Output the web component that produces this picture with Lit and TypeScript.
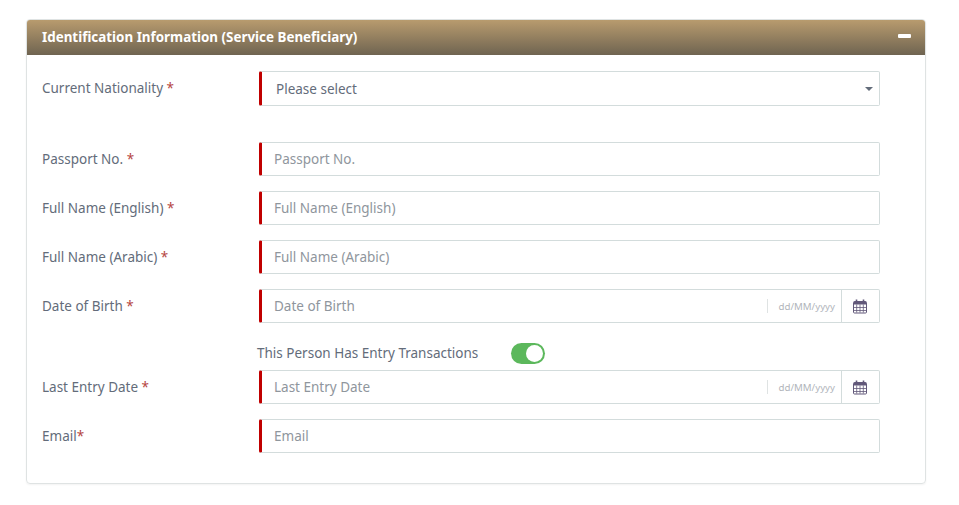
import { LitElement, css, html } from "lit";
import { customElement } from "lit/decorators.js";

const calendar = html`<svg width="14" height="15" viewBox="0 0 14 15">
  <path
    d="M1.5 2.5h11a1 1 0 0 1 1 1v9.500a1 1 0 0 1-1 1h-11a1 1 0 0 1-1-1v-9.500a1 1 0 0 1 1-1z"
    fill="none"
    stroke="#62597a"
  />
  <path d="M1 2.500h12V5.500H1z" fill="#62597a" />
  <path
    d="M1 8.500h12M1 11.500h12M3.700 5.500v8M7 5.500v8M10.300 5.500v8"
    fill="none"
    stroke="#62597a"
    stroke-width="0.8"
  />
  <path d="M3.500 .5v3M10.500 .5v3" stroke="#62597a" stroke-width="1.6" />
</svg>`;

@customElement("app-root")
export class AppRoot extends LitElement {
  renderInput(label: string, star = " *") {
    return html`
      <div class="row">
        <label>${label}<span class="req">${star}</span></label>
        <div class="field">
          <input type="text" placeholder=${label} />
        </div>
      </div>
    `;
  }

  renderDate(label: string) {
    return html`
      <div class="row">
        <label>${label}<span class="req"> *</span></label>
        <div class="field">
          <input type="text" placeholder=${label} />
          <span class="format">dd/MM/yyyy</span>
          <span class="addon">${calendar}</span>
        </div>
      </div>
    `;
  }

  render() {
    return html`
      <div class="card">
        <div class="card-header">
          <span>Identification Information (Service Beneficiary)</span>
          <span class="collapse"></span>
        </div>
        <div class="card-body">
          <div class="row select-row">
            <label>Current Nationality<span class="req"> *</span></label>
            <div class="field select">
              <span>Please select</span>
              <span class="caret"></span>
            </div>
          </div>
          ${this.renderInput("Passport No.")}
          ${this.renderInput("Full Name (English)")}
          ${this.renderInput("Full Name (Arabic)")}
          ${this.renderDate("Date of Birth")}
          <div class="toggle-row">
            <span class="toggle-label">This Person Has Entry Transactions</span>
            <span class="switch"><span class="knob"></span></span>
          </div>
          ${this.renderDate("Last Entry Date")}
          ${this.renderInput("Email", "*")}
        </div>
      </div>
    `;
  }

  static styles = css`
    :host {
      display: block;
      height: 505px;
      padding: 19px 33px 0 26px;
      box-sizing: border-box;
      background: #fff;
      font-family: "Noto Sans", "Open Sans", sans-serif;
      font-size: 13.5px;
      color: #636c7a;
    }

    .card {
      height: 465px;
      box-sizing: border-box;
      border: 1px solid #dfe3e3;
      border-radius: 4px;
      box-shadow: 0 1px 2px rgba(0, 0, 0, 0.05);
    }

    .card-header {
      height: 35px;
      padding: 0 14px 1px 15px;
      box-sizing: border-box;
      display: flex;
      align-items: center;
      justify-content: space-between;
      border-radius: 3px 3px 0 0;
      background: linear-gradient(#b89b6e, #6f6451);
      color: #fff;
      font-size: 13.4px;
      font-weight: 700;
    }

    .collapse {
      width: 13px;
      height: 4px;
      margin-bottom: 2px;
      border-radius: 1px;
      background: #fff;
    }

    .card-body {
      padding: 16px 45px 0 15px;
    }

    .row {
      display: flex;
      height: 34px;
      margin-bottom: 15px;
    }

    .select-row {
      height: 35px;
      margin-bottom: 36px;
    }

    label {
      width: 217px;
      flex: none;
      line-height: 35px;
    }

    .select-row label {
      line-height: 34px;
    }

    .req {
      color: #b5453f;
    }

    .field {
      flex: 1;
      display: flex;
      align-items: center;
      box-sizing: border-box;
      border: 1px solid #d3dcdc;
      border-left: 3px solid #c00000;
      border-radius: 2px;
    }

    .select {
      padding: 0 6px 0 14px;
      justify-content: space-between;
    }

    .caret {
      border: 4px solid transparent;
      border-top-color: #636c7a;
      border-bottom: none;
    }

    input {
      flex: 1;
      min-width: 0;
      height: 100%;
      box-sizing: border-box;
      padding: 0 12px;
      border: none;
      outline: none;
      background: transparent;
      font: inherit;
    }

    input::placeholder {
      color: #8f969d;
      opacity: 1;
    }

    .format {
      height: 14px;
      padding: 0 6px 0 11px;
      border-left: 1px solid #dfe3e3;
      color: #b1b5bb;
      font-size: 9.7px;
      line-height: 15px;
    }

    .addon {
      width: 38px;
      height: 100%;
      flex: none;
      box-sizing: border-box;
      padding-right: 1px;
      display: flex;
      align-items: center;
      justify-content: center;
      border-left: 1px solid #d3dcdc;
    }

    .toggle-row {
      display: flex;
      align-items: center;
      height: 21px;
      margin: 20px 0 6px 215px;
    }

    .toggle-label {
      width: 254px;
      margin-bottom: 2px;
    }

    .switch {
      display: flex;
      justify-content: flex-end;
      align-items: center;
      width: 34px;
      height: 21px;
      padding: 0 2px;
      box-sizing: border-box;
      border-radius: 11px;
      background: #5cb85c;
    }

    .knob {
      width: 17px;
      height: 17px;
      border-radius: 50%;
      background: #fff;
    }
  `;
}
